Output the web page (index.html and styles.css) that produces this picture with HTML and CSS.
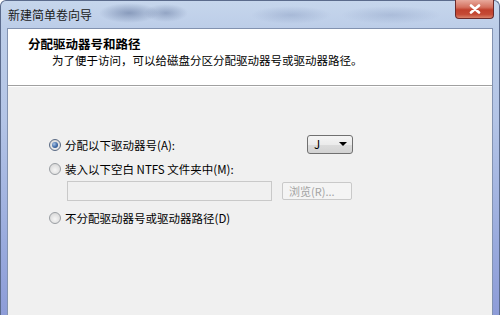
FILE: index.html
```html
<!DOCTYPE html>
<html lang="zh-CN">
<head>
<meta charset="utf-8">
<title>新建简单卷向导</title>
<link rel="stylesheet" href="styles.css">
</head>
<body>
<div class="window">
  <div class="titlebar">
    <span class="title">新建简单卷向导</span>
    <div class="close">
      <svg width="12" height="10" viewBox="0 0 12 10"><path d="M2 1.5 L10 8.5 M10 1.5 L2 8.5" stroke="#fff" stroke-width="2.6" stroke-linecap="round"/></svg>
    </div>
  </div>
  <div class="client">
    <div class="header">
      <div class="h-title">分配驱动器号和路径</div>
      <div class="h-sub">为了便于访问，可以给磁盘分区分配驱动器号或驱动器路径。</div>
    </div>
    <div class="sep"></div>
    <div class="content">
      <div class="option">
        <span class="radio checked"></span>
        <span class="label drive-label">分配以下驱动器号(A):</span>
        <div class="combo"><span>J</span><span class="arrow"></span></div>
      </div>
      <div class="option second">
        <span class="radio"></span>
        <span class="label">装入以下空白 NTFS 文件夹中(M):</span>
      </div>
      <div class="path-row">
        <div class="path-input"></div>
        <div class="browse">浏览(R)...</div>
      </div>
      <div class="option third">
        <span class="radio"></span>
        <span class="label">不分配驱动器号或驱动器路径(D)</span>
      </div>
    </div>
  </div>
</div>
</body>
</html>
```
FILE: styles.css
```css
html, body {
  margin: 0;
  padding: 0;
}
body {
  width: 500px;
  height: 315px;
  overflow: hidden;
  font-family: "Noto Sans CJK SC", "Liberation Sans", sans-serif;
  font-size: 12px;
  color: #000;
}
.window {
  box-sizing: border-box;
  height: 315px;
  display: flex;
  flex-direction: column;
  border: 1px solid #5b6b8c;
  border-bottom: none;
  border-radius: 6px 6px 0 0;
  padding: 0 6px;
  background:
    radial-gradient(ellipse 30px 10px at 128px 12px, rgba(90,110,150,0.55), rgba(90,110,150,0) 100%),
    radial-gradient(ellipse 22px 9px at 165px 12px, rgba(90,110,150,0.45), rgba(90,110,150,0) 100%),
    radial-gradient(ellipse 40px 9px at 290px 14px, rgba(120,140,180,0.35), rgba(120,140,180,0) 100%),
    radial-gradient(ellipse 50px 9px at 390px 14px, rgba(120,140,180,0.3), rgba(120,140,180,0) 100%),
    linear-gradient(180deg, #c6d6ec 0px, #bccde8 28px, #b3c4e6 120px, #9aabdd 240px, #8d9cd8 315px);
}
.titlebar {
  height: 27px;
  display: flex;
  align-items: center;
  justify-content: space-between;
}
.title {
  padding-left: 1px;
  font-size: 12px;
  color: #1a1a1a;
  line-height: 16px;
}
.close {
  align-self: flex-start;
  margin-top: -1px;
  margin-right: -1px;
  width: 39px;
  height: 19px;
  box-sizing: border-box;
  border: 1px solid #6b2a2a;
  border-top: none;
  border-radius: 0 0 4px 4px;
  background: linear-gradient(180deg, #e8a99c 0%, #d4715f 40%, #c0402c 55%, #c54a35 80%, #d9826a 100%);
  display: flex;
  align-items: center;
  justify-content: center;
}
.client {
  flex: 1;
  display: flex;
  flex-direction: column;
  border: 1px solid #8292b0;
  border-bottom: none;
  background: #f0f0f0;
}
.header {
  height: 56px;
  box-sizing: border-box;
  background: #fff;
  padding-top: 7px;
}
.h-title {
  padding-left: 20px;
  font-size: 12.5px;
  font-weight: bold;
  line-height: 16px;
}
.h-sub {
  padding-left: 44px;
  font-size: 11.5px;
  line-height: 16px;
}
.sep {
  height: 1px;
  background: #a0a0a0;
  border-bottom: 1px solid #fff;
}
.content {
  padding: 48px 0 0 41px;
  display: flex;
  flex-direction: column;
}
.option {
  display: flex;
  align-items: center;
  height: 20px;
  gap: 4px;
}
.option.second {
  margin-top: 4px;
}
.option.third {
  margin-top: 7px;
}
.label {
  font-size: 11.5px;
  line-height: 16px;
  white-space: nowrap;
}
.drive-label {
  width: 238px;
}
.radio {
  width: 12px;
  height: 12px;
  box-sizing: border-box;
  border-radius: 50%;
  border: 1px solid #9a9ea3;
  background: radial-gradient(circle at 50% 60%, #f6f6f6 0%, #dcdcdc 70%, #cfcfcf 100%);
  position: relative;
  flex: none;
}
.radio.checked {
  border-color: #5a6a84;
}
.radio.checked::after {
  content: "";
  position: absolute;
  left: 2px;
  top: 2px;
  width: 6px;
  height: 6px;
  border-radius: 50%;
  background: radial-gradient(circle at 35% 35%, #a9c4e6 0%, #3f6aa6 55%, #27457a 100%);
}
.combo {
  width: 46px;
  height: 19px;
  box-sizing: border-box;
  border: 1px solid #707070;
  border-radius: 3px;
  background: linear-gradient(180deg, #f4f4f4 0%, #ebebeb 50%, #dcdcdc 51%, #d2d2d2 100%);
  display: flex;
  align-items: center;
  justify-content: space-between;
  padding: 0 5px 0 6px;
  font-size: 11.5px;
  line-height: 16px;
  margin-top: -2px;
}
.arrow {
  width: 0;
  height: 0;
  border-left: 4px solid transparent;
  border-right: 4px solid transparent;
  border-top: 4px solid #000;
}
.path-row {
  display: flex;
  align-items: center;
  margin-top: 2px;
  margin-left: 18px;
  gap: 10px;
}
.path-input {
  width: 205px;
  height: 20px;
  box-sizing: border-box;
  border: 1px solid #c9c9c9;
  background: #f0f0f0;
}
.browse {
  width: 70px;
  height: 18px;
  box-sizing: border-box;
  border: 1px solid #c9c9c9;
  border-radius: 2px;
  background: #f4f4f4;
  color: #a3a3a3;
  font-size: 11px;
  line-height: 16px;
  padding-left: 6px;
}
```
